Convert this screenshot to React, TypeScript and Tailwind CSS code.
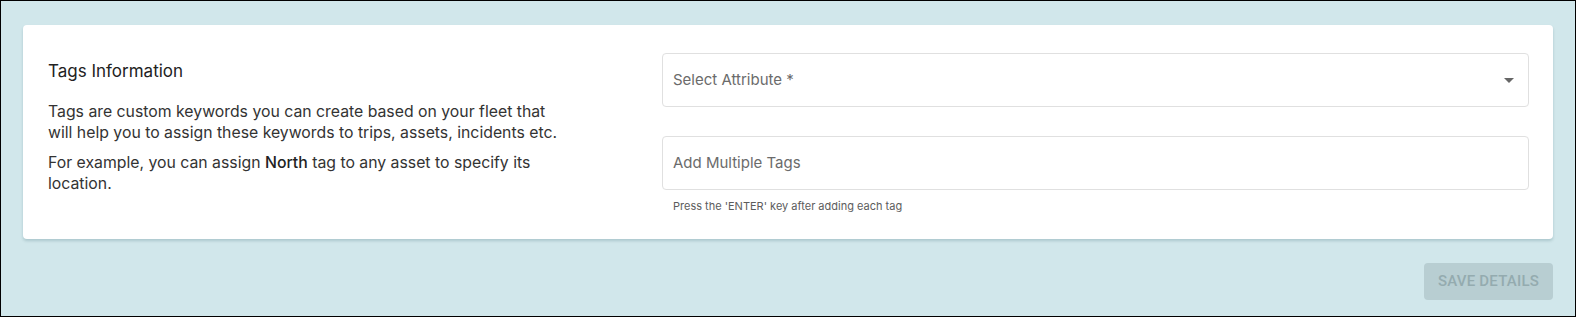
export default function App() {
  return (
    <div className="w-[1576px] h-[317px] border border-black bg-[#d1e7eb] px-[22px] pt-[24px] font-['Inter',sans-serif]">
      <div className="flex rounded-[4px] bg-white pl-[25px] pr-[24px] pt-[28px] h-[214px] shadow-[0_2px_3px_rgba(0,60,70,0.18)]">
        <div className="w-[614px] pt-[6px]">
          <h2 className="text-[17px] leading-[24px] text-[#222]">Tags Information</h2>
          <div className="mt-[18px] max-w-[515px] text-[15.8px] leading-[21px] text-[#333]">
            <p>
              Tags are custom keywords you can create based on your fleet that will help you to assign these
              keywords to trips, assets, incidents etc.
            </p>
            <p className="mt-[9px]">
              For example, you can assign <span className="font-medium text-[#222]">North</span> tag to any asset to
              specify its location.
            </p>
          </div>
        </div>
        <div className="flex-1">
          <div className="flex h-[54px] items-center justify-between rounded-[4px] border border-[#e0e0e0] pl-[10px] pr-[14px]">
            <span className="text-[15px] text-[#6b6b6b]">Select Attribute *</span>
            <svg width="10" height="5" viewBox="0 0 10 5" className="fill-[#666]">
              <path d="M0 0h10L5 5z" />
            </svg>
          </div>
          <div className="mt-[29px] flex h-[54px] items-center rounded-[4px] border border-[#e0e0e0] pl-[10px]">
            <span className="text-[15px] text-[#6b6b6b]">Add Multiple Tags</span>
          </div>
          <p className="mt-[9px] pl-[11px] text-[11px] leading-[14px] text-[#5c5c5c]">
            Press the 'ENTER' key after adding each tag
          </p>
        </div>
      </div>
      <div className="mt-[24px] flex justify-end">
        <button className="h-[37px] w-[129px] rounded-[4px] bg-[#b8ced2] font-['Roboto',sans-serif] text-[15px] font-medium uppercase tracking-[0.2px] text-[#94abaf]">
          Save Details
        </button>
      </div>
    </div>
  );
}
